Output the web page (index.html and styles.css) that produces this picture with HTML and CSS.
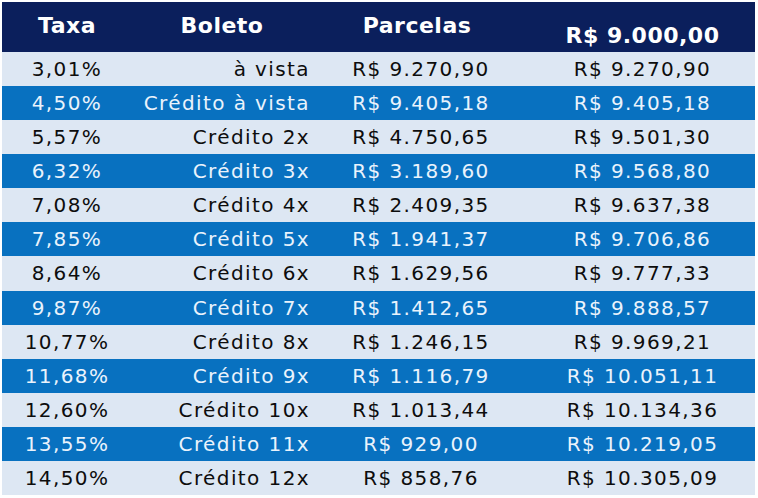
FILE: index.html
```html
<!DOCTYPE html>
<html lang="pt-BR">
<head>
<meta charset="utf-8">
<title>Taxas</title>
<link rel="stylesheet" href="styles.css">
</head>
<body>
<div class="table">
  <div class="head">
    <div class="h c1">Taxa</div>
    <div class="h c2">Boleto</div>
    <div class="h c3">Parcelas</div>
    <div class="h c4 low">R$ 9.000,00</div>
  </div>
  <div class="body">
    <div class="row light"><div class="c1">3,01%</div><div class="c2">à vista</div><div class="c3">R$ 9.270,90</div><div class="c4">R$ 9.270,90</div></div>
    <div class="row dark"><div class="c1">4,50%</div><div class="c2">Crédito à vista</div><div class="c3">R$ 9.405,18</div><div class="c4">R$ 9.405,18</div></div>
    <div class="row light"><div class="c1">5,57%</div><div class="c2">Crédito 2x</div><div class="c3">R$ 4.750,65</div><div class="c4">R$ 9.501,30</div></div>
    <div class="row dark"><div class="c1">6,32%</div><div class="c2">Crédito 3x</div><div class="c3">R$ 3.189,60</div><div class="c4">R$ 9.568,80</div></div>
    <div class="row light"><div class="c1">7,08%</div><div class="c2">Crédito 4x</div><div class="c3">R$ 2.409,35</div><div class="c4">R$ 9.637,38</div></div>
    <div class="row dark"><div class="c1">7,85%</div><div class="c2">Crédito 5x</div><div class="c3">R$ 1.941,37</div><div class="c4">R$ 9.706,86</div></div>
    <div class="row light"><div class="c1">8,64%</div><div class="c2">Crédito 6x</div><div class="c3">R$ 1.629,56</div><div class="c4">R$ 9.777,33</div></div>
    <div class="row dark"><div class="c1">9,87%</div><div class="c2">Crédito 7x</div><div class="c3">R$ 1.412,65</div><div class="c4">R$ 9.888,57</div></div>
    <div class="row light"><div class="c1">10,77%</div><div class="c2">Crédito 8x</div><div class="c3">R$ 1.246,15</div><div class="c4">R$ 9.969,21</div></div>
    <div class="row dark"><div class="c1">11,68%</div><div class="c2">Crédito 9x</div><div class="c3">R$ 1.116,79</div><div class="c4">R$ 10.051,11</div></div>
    <div class="row light"><div class="c1">12,60%</div><div class="c2">Crédito 10x</div><div class="c3">R$ 1.013,44</div><div class="c4">R$ 10.134,36</div></div>
    <div class="row dark"><div class="c1">13,55%</div><div class="c2">Crédito 11x</div><div class="c3">R$ 929,00</div><div class="c4">R$ 10.219,05</div></div>
    <div class="row light"><div class="c1">14,50%</div><div class="c2">Crédito 12x</div><div class="c3">R$ 858,76</div><div class="c4">R$ 10.305,09</div></div>
  </div>
</div>
</body>
</html>
```
FILE: styles.css
```css
html, body {
  margin: 0;
  padding: 0;
  background: #ffffff;
}
body {
  padding: 2px 0 0 2px;
  font-family: "DejaVu Sans", "Noto Sans", sans-serif;
}
.table {
  width: 753px;
}
.head,
.row {
  display: grid;
  grid-template-columns: 130px 180px 218px 225px;
}
.head {
  height: 50px;
  background: #0b1f5c;
  color: #ffffff;
  font-weight: bold;
  font-size: 22px;
  line-height: 26px;
  letter-spacing: 0.5px;
}
.h {
  text-align: center;
  align-self: start;
  padding-top: 11px;
}
.h.low {
  align-self: end;
  padding-top: 0;
  padding-bottom: 3px;
}
.body {
  display: grid;
  grid-template-rows: repeat(13, 1fr);
  height: 443px;
}
.row {
  align-items: center;
  font-size: 20px;
  line-height: 24px;
  letter-spacing: 1.4px;
}
.row.light {
  background: #dde7f3;
  color: #0d0d0d;
}
.row.dark {
  background: #0871c0;
  color: #eaf3fc;
}
.row .c1,
.row .c3,
.row .c4 {
  text-align: center;
}
.row .c2 {
  text-align: right;
  padding-right: 2px;
}
.head .c3 {
  padding-right: 8px;
}
```
